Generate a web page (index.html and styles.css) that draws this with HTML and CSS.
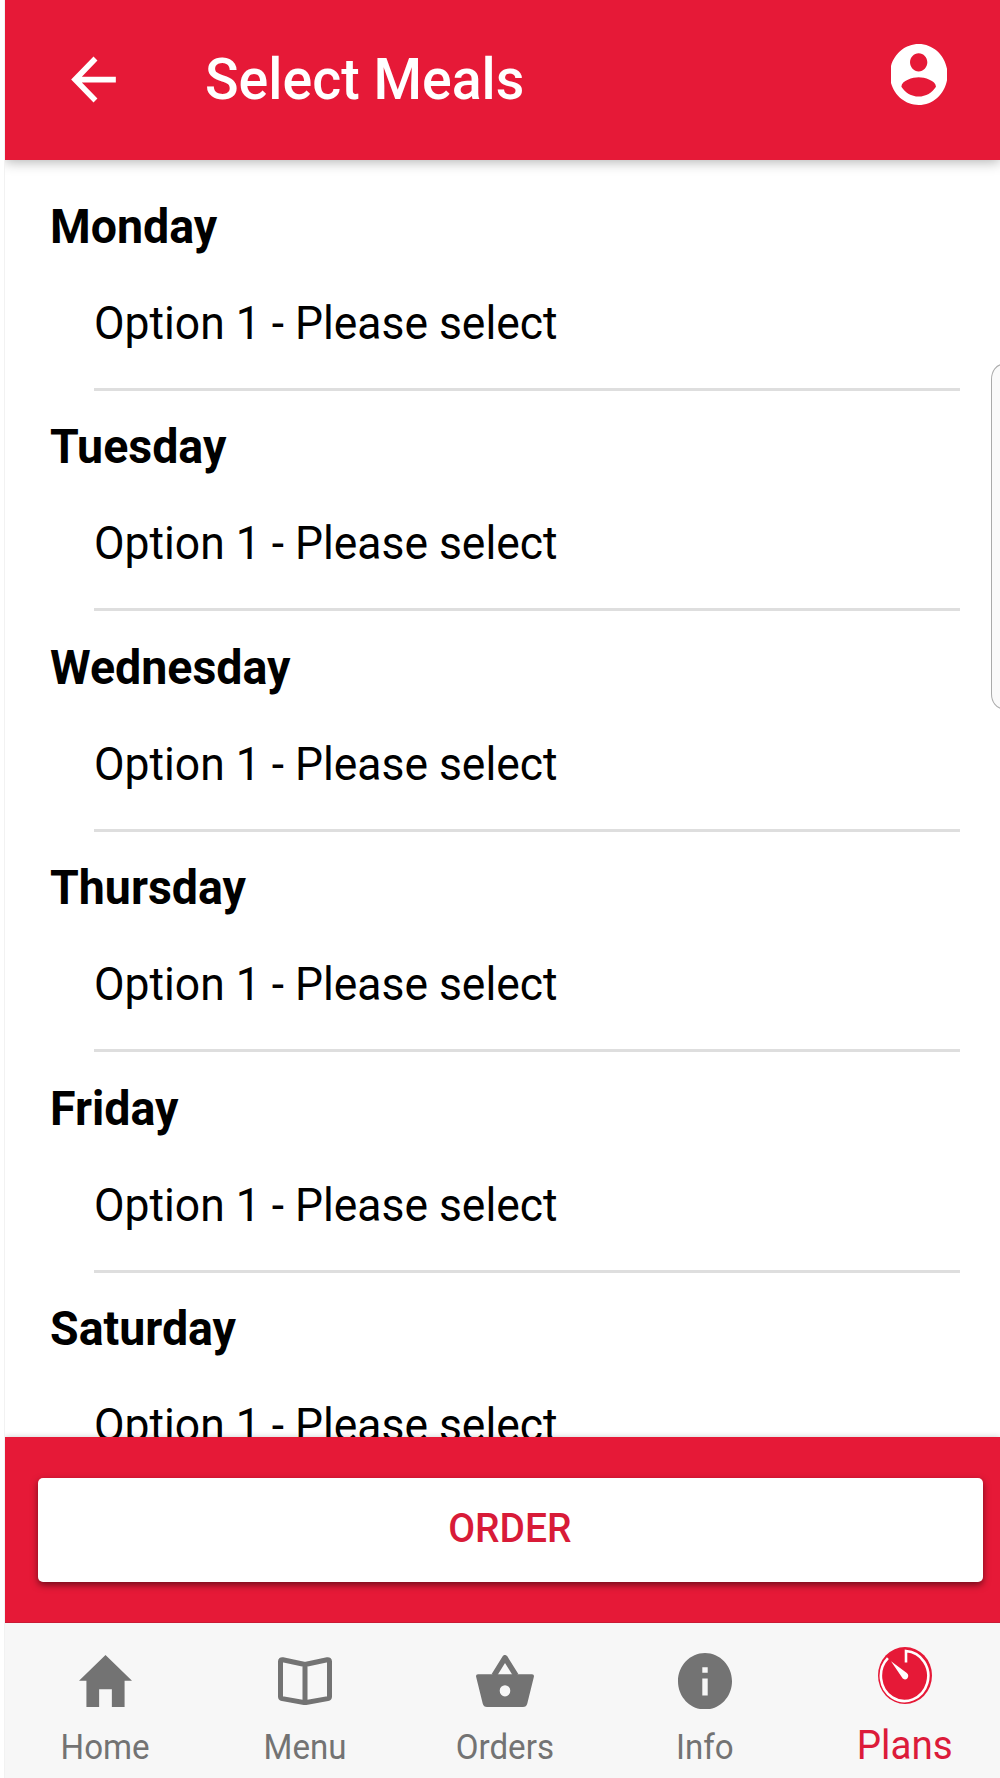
FILE: index.html
```
<!DOCTYPE html>
<html lang="en">
<head>
  <meta charset="UTF-8">
  <title>Select Meals</title>
  <link rel="stylesheet" href="styles.css">
</head>
<body>
  <div class="app">

    <header class="header">
      <svg class="back-icon" viewBox="0 0 24 24" preserveAspectRatio="none">
        <path d="M20 11H7.83l5.59-5.59L12 4l-8 8 8 8 1.41-1.41L7.83 13H20v-2z"/>
      </svg>
      <h1 class="title"><span>Select Meals</span></h1>
      <svg class="account-icon" viewBox="2.4 2 19.6 20" preserveAspectRatio="none">
        <path d="M12 2C6.48 2 2 6.48 2 12s4.48 10 10 10 10-4.48 10-10S17.52 2 12 2zm0 3c1.66 0 3 1.34 3 3s-1.34 3-3 3-3-1.34-3-3 1.34-3 3-3zm0 14.2c-2.5 0-4.71-1.28-6-3.22.03-1.99 4-3.08 6-3.08 1.99 0 5.97 1.09 6 3.08-1.29 1.94-3.5 3.22-6 3.22z"/>
      </svg>
    </header>

    <main class="days">
      <section class="day">
        <h2><span>Monday</span></h2>
        <div class="option"><span>Option 1 - Please select</span></div>
      </section>
      <section class="day">
        <h2><span>Tuesday</span></h2>
        <div class="option"><span>Option 1 - Please select</span></div>
      </section>
      <section class="day">
        <h2><span>Wednesday</span></h2>
        <div class="option"><span>Option 1 - Please select</span></div>
      </section>
      <section class="day">
        <h2><span>Thursday</span></h2>
        <div class="option"><span>Option 1 - Please select</span></div>
      </section>
      <section class="day">
        <h2><span>Friday</span></h2>
        <div class="option"><span>Option 1 - Please select</span></div>
      </section>
      <section class="day">
        <h2><span>Saturday</span></h2>
        <div class="option"><span>Option 1 - Please select</span></div>
      </section>
    </main>

    <div class="order-bar">
      <button class="order-btn"><span>ORDER</span></button>
    </div>

    <nav class="tabs">
      <a class="tab">
        <svg class="home-icon" viewBox="2 3 20 17" preserveAspectRatio="none">
          <path d="M9.6 20v-5.8h4.8V20h4.8v-8.6H22L12 3 2 11.4h2.8V20z"/>
        </svg>
        <span>Home</span>
      </a>
      <a class="tab">
        <svg class="menu-icon" viewBox="0 0 54 48">
          <path d="M27 7.5 4.8 2.7Q2.5 2.3 2.5 4.5V39.5Q2.5 41.2 4.3 41.6L27 45.7 49.7 41.6Q51.5 41.2 51.5 39.5V4.5Q51.5 2.3 49.2 2.7ZV45.7"/>
        </svg>
        <span>Menu</span>
      </a>
      <a class="tab">
        <svg class="orders-icon" viewBox="0 0 58 52">
          <path class="handle" d="M18 20.5 29 2.8 40 20.5"/>
          <path fill-rule="evenodd" d="M2 19.3H56Q58.4 19.3 57.9 21.8L51.3 48.5Q50.4 52 47 52H11Q7.6 52 6.7 48.5L.1 21.8Q-.4 19.3 2 19.3ZM29 30.2a5.3 5.6 0 1 0 0 11.2 5.3 5.6 0 1 0 0-11.2Z"/>
        </svg>
        <span>Orders</span>
      </a>
      <a class="tab">
        <svg class="info-icon" viewBox="2 2 20 20" preserveAspectRatio="none">
          <path d="M12 2C6.48 2 2 6.48 2 12s4.48 10 10 10 10-4.48 10-10S17.52 2 12 2zm1 15h-2v-6h2v6zm0-8h-2V7h2v2z"/>
        </svg>
        <span>Info</span>
      </a>
      <a class="tab active">
        <svg class="plans-icon" viewBox="0 0 54 57">
          <ellipse cx="27" cy="28.5" rx="27" ry="28.5"/>
          <path class="dial" d="M28 15.5V4A23.7 25 0 1 1 9.9 11.2"/>
          <path class="needle" d="M13 14.3 28.8 26A3.3 3.5 0 1 1 23.9 30.2Z"/>
        </svg>
        <span>Plans</span>
      </a>
    </nav>

    <div class="edge-handle"></div>
  </div>
</body>
</html>
```
FILE: styles.css
```
* {
  box-sizing: border-box;
}

body {
  margin: 0;
  background: #fff;
  font-family: Roboto, sans-serif;
  color: #000;
}

.app {
  position: relative;
  display: flex;
  flex-direction: column;
  height: 1778px;
  margin-left: 4px;
  border-left: 1px solid #f2f2f2;
  overflow: hidden;
}

/* glyphs are slightly condensed */
span {
  display: inline-block;
  white-space: nowrap;
  transform: scaleX(0.965);
}

.header {
  position: relative;
  z-index: 1;
  display: flex;
  align-items: center;
  flex: none;
  height: 160px;
  padding: 0 53px 0 55px;
  background: #e61937;
  box-shadow: 0 2px 12px rgba(0, 0, 0, 0.3);
}

.header svg {
  fill: #fff;
}

.back-icon {
  width: 67px;
  height: 69px;
  margin-bottom: 2px;
}

.title {
  flex: 1;
  margin: 0 0 1px 77.5px;
  font-size: 57.5px;
  font-weight: 500;
  line-height: 70px;
}

.title span {
  color: #fff;
  transform-origin: left;
}

.account-icon {
  width: 56.5px;
  height: 61px;
  margin-bottom: 11px;
}

.days {
  flex: none;
  height: 1277px;
  padding-top: 10.5px;
  overflow: hidden;
}

.day {
  height: 220.5px;
  padding: 26.2px 40px 0 44.5px;
}

.day h2 {
  margin: 0 0 36.1px;
  font-size: 48.2px;
  font-weight: 700;
  line-height: 60px;
}

.day h2 span,
.option span {
  transform-origin: left;
}

.option {
  height: 98.2px;
  margin-left: 44.5px;
  border-bottom: 3px solid #dedede;
  font-size: 46.5px;
  line-height: 60px;
}

.option span {
  transform: scaleX(0.955);
}

.order-bar {
  position: relative;
  z-index: 1;
  flex: none;
  height: 185px;
  padding: 41px 17.5px 0 33px;
  background: #e61937;
  box-shadow: 0 0 6px rgba(0, 0, 0, 0.2);
}

.order-btn {
  display: block;
  width: 100%;
  height: 104px;
  padding: 0 0 4px;
  border: 0;
  border-radius: 5px;
  background: #fff;
  box-shadow: 0 3px 7px rgba(0, 0, 0, 0.5);
  color: #d81b38;
  font-family: inherit;
  font-size: 41px;
  font-weight: 500;
}

.order-btn span {
  transform: scaleX(0.95);
}

.tabs {
  position: relative;
  z-index: 2;
  flex: 1;
  display: flex;
  background: #f7f7f7;
  border-top: 1px solid #c91a35;
}

.tab {
  width: 200px;
  flex: none;
  display: flex;
  flex-direction: column;
  align-items: center;
  justify-content: flex-end;
  padding-bottom: 11px;
  color: #737373;
  font-size: 34.3px;
  line-height: 40px;
}

.tab svg {
  fill: #737373;
}

.home-icon {
  width: 53px;
  height: 52px;
  margin-bottom: 20px;
}

.menu-icon {
  width: 54px;
  height: 48px;
  margin-bottom: 22px;
}

.tab .menu-icon {
  fill: none;
  stroke: #737373;
  stroke-width: 5;
  stroke-linejoin: round;
}

.orders-icon {
  width: 58px;
  height: 52px;
  margin-bottom: 20px;
}

.handle {
  fill: none;
  stroke: #737373;
  stroke-width: 5.5;
  stroke-linejoin: round;
}

.info-icon {
  width: 54px;
  height: 56.5px;
  margin-bottom: 18px;
}

.tab.active {
  padding-bottom: 12px;
  color: #dc1b3a;
  font-size: 40px;
}

.tab .plans-icon {
  width: 54px;
  height: 57px;
  margin-bottom: 22.5px;
  fill: #e61937;
}

.dial {
  fill: none;
  stroke: #fff;
  stroke-width: 2.6;
}

.needle {
  fill: #fff;
}

/* side panel handle peeking in from the right edge */
.edge-handle {
  position: absolute;
  top: 364px;
  right: -14px;
  width: 23px;
  height: 345px;
  border: 1px solid #aaa;
  border-radius: 12px / 16px;
  background: #fafafa;
}
```
